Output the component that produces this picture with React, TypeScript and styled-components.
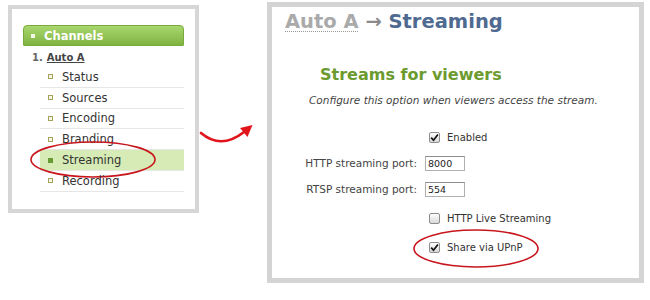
import React from "react";
import styled, { createGlobalStyle } from "styled-components";

const GlobalStyle = createGlobalStyle`
  html, body { margin: 0; padding: 0; background: #fff; }
  body { font-family: "DejaVu Sans", Verdana, sans-serif; }
`;

const Page = styled.div`
  width: 650px;
  height: 300px;
  box-sizing: border-box;
  display: flex;
  align-items: flex-start;
  padding: 2px 0 0 8px;
`;

/* ---------- left navigation ---------- */
const NavPanel = styled.nav`
  margin-top: 3px;
  width: 191px;
  height: 208px;
  flex: none;
  box-sizing: border-box;
  border: 4px solid #d6d6d6;
  padding: 16px 11px 0;
  display: flex;
  flex-direction: column;
`;

const NavHeader = styled.div`
  height: 21px;
  box-sizing: border-box;
  border: 1px solid #78aa3c;
  border-radius: 4px 4px 1px 1px;
  background: linear-gradient(#a9d66e, #7fb441);
  display: flex;
  align-items: center;
  gap: 9px;
  padding-left: 7px;
  color: #fff;
  font-weight: bold;
  font-size: 11.5px;
`;

const HeaderBullet = styled.span`
  width: 4px;
  height: 4px;
  background: #f1f8e6;
`;

const ChannelLine = styled.div`
  height: 20px;
  margin-top: 1px;
  padding-left: 9px;
  display: flex;
  align-items: center;
  gap: 4px;
  font-size: 10px;
  font-weight: bold;
  color: #666;
`;

const ChannelLink = styled.span`
  color: #444;
  text-decoration: underline;
`;

const NavList = styled.ul`
  list-style: none;
  margin: 0 0 0 17px;
  padding: 0;
`;

const NavItem = styled.li<{ $active?: boolean }>`
  position: relative;
  height: 20.8px;
  box-sizing: border-box;
  border-bottom: 1px solid #e6e6e6;
  display: flex;
  align-items: center;
  gap: 9px;
  padding-left: 8px;
  font-size: 11.5px;
  color: #333;
  background: ${(p) => (p.$active ? "#d6ebb5" : "transparent")};
`;

const ItemBullet = styled.span<{ $active?: boolean }>`
  width: 5px;
  height: 5px;
  box-sizing: border-box;
  border: 1px solid ${(p) => (p.$active ? "#6a9a34" : "#a3a35e")};
  background: ${(p) => (p.$active ? "#6a9a34" : "#f6f6e6")};
`;

const NavRing = styled.svg`
  position: absolute;
  left: -10px;
  top: -9px;
  overflow: visible;
  pointer-events: none;
`;

/* ---------- arrow between panels ---------- */
const ArrowSlot = styled.div`
  width: 68px;
  flex: none;
  margin-top: 118px;
  display: flex;
`;

/* ---------- right content ---------- */
const ContentPanel = styled.section`
  width: 377px;
  height: 281px;
  flex: none;
  box-sizing: border-box;
  border: 5px solid #d4d4d4;
  display: flex;
  flex-direction: column;
`;

const PageTitle = styled.h1`
  margin: 3px 0 0 13px;
  font-size: 19.5px;
  line-height: 23px;
  font-weight: bold;
  color: #4f6a91;
  white-space: nowrap;
`;

const Crumb = styled.span`
  color: #aaa;
  text-decoration: underline dotted #999;
  text-decoration-thickness: 1px;
  text-underline-offset: 3px;
`;

const CrumbArrow = styled.span`
  color: #8a8a8a;
`;

const SectionTitle = styled.h2`
  margin: 31.5px 0 0 48px;
  font-size: 16px;
  line-height: 20px;
  font-weight: bold;
  color: #6b9a2e;
`;

const Hint = styled.p`
  margin: 8px 0 0 37px;
  font-size: 10.5px;
  line-height: 14px;
  font-style: italic;
  color: #444;
  white-space: nowrap;
`;

const Form = styled.div`
  margin-top: 22.5px;
  display: flex;
  flex-direction: column;
`;

const FormRow = styled.div<{ $gap: number }>`
  margin-top: ${(p) => p.$gap}px;
  height: 16px;
  display: grid;
  grid-template-columns: 145px auto;
  column-gap: 8px;
  align-items: center;
`;

const FieldLabel = styled.label`
  grid-column: 1;
  text-align: right;
  font-size: 10.5px;
  color: #444;
  white-space: nowrap;
`;

const FieldCell = styled.div`
  grid-column: 2;
  display: flex;
  align-items: center;
`;

const PortInput = styled.input`
  width: 40px;
  height: 15px;
  box-sizing: border-box;
  border: 1px solid #b0b0b0;
  border-top-color: #8c8c8c;
  padding: 0 2px;
  margin: 0;
  font-family: "DejaVu Sans", Verdana, sans-serif;
  font-size: 9.5px;
  color: #222;
  outline: none;
`;

const CheckOption = styled.div`
  position: relative;
  margin-left: 4px;
  display: flex;
  align-items: center;
  gap: 7px;
  font-size: 10px;
  color: #333;
  white-space: nowrap;
`;

const CheckBox = styled.span`
  width: 11px;
  height: 11px;
  box-sizing: border-box;
  border: 1px solid #8e8e8e;
  border-radius: 2px;
  background: linear-gradient(#fdfdfd, #d9d9d9);
  display: flex;
  align-items: center;
  justify-content: center;
`;

const OptionRing = styled.svg`
  position: absolute;
  left: -16px;
  top: -13px;
  overflow: visible;
  pointer-events: none;
`;

const RED = "#c8161d";

function Ring({ w, h, as: Comp }: { w: number; h: number; as: typeof NavRing }) {
  return (
    <Comp width={w} height={h} viewBox={`0 0 ${w} ${h}`}>
      <ellipse
        cx={w / 2}
        cy={h / 2}
        rx={w / 2 - 1}
        ry={h / 2 - 1}
        fill="none"
        stroke={RED}
        strokeWidth={1.6}
      />
    </Comp>
  );
}

function Check({ checked }: { checked: boolean }) {
  return (
    <CheckBox>
      {checked && (
        <svg width="9" height="9" viewBox="0 0 9 9">
          <path d="M1.2 4.6 L3.5 7.2 L7.9 1.4" fill="none" stroke="#111" strokeWidth="1.7" />
        </svg>
      )}
    </CheckBox>
  );
}

const navItems = ["Status", "Sources", "Encoding", "Branding", "Streaming", "Recording"];

export default function App() {
  return (
    <>
      <GlobalStyle />
      <Page>
        <NavPanel>
          <NavHeader>
            <HeaderBullet />
            Channels
          </NavHeader>
          <ChannelLine>
            1. <ChannelLink>Auto A</ChannelLink>
          </ChannelLine>
          <NavList>
            {navItems.map((item) => {
              const active = item === "Streaming";
              return (
                <NavItem key={item} $active={active}>
                  <ItemBullet $active={active} />
                  {item}
                  {active && <Ring w={126} h={37} as={NavRing} />}
                </NavItem>
              );
            })}
          </NavList>
        </NavPanel>

        <ArrowSlot>
          <svg width="60" height="25" viewBox="0 0 60 25">
            <path d="M2 13 Q22 30 45 12" fill="none" stroke="#e0141a" strokeWidth="2.6" strokeLinecap="round" />
            <path d="M53.5 5 L41 8 L48.5 17 Z" fill="#e0141a" />
          </svg>
        </ArrowSlot>

        <ContentPanel>
          <PageTitle>
            <Crumb>Auto A</Crumb> <CrumbArrow>→</CrumbArrow> Streaming
          </PageTitle>
          <SectionTitle>Streams for viewers</SectionTitle>
          <Hint>Configure this option when viewers access the stream.</Hint>
          <Form>
            <FormRow $gap={0}>
              <FieldCell>
                <CheckOption>
                  <Check checked />
                  Enabled
                </CheckOption>
              </FieldCell>
            </FormRow>
            <FormRow $gap={10}>
              <FieldLabel>HTTP streaming port:</FieldLabel>
              <FieldCell>
                <PortInput readOnly value="8000" />
              </FieldCell>
            </FormRow>
            <FormRow $gap={10}>
              <FieldLabel>RTSP streaming port:</FieldLabel>
              <FieldCell>
                <PortInput readOnly value="554" />
              </FieldCell>
            </FormRow>
            <FormRow $gap={13}>
              <FieldCell>
                <CheckOption>
                  <Check checked={false} />
                  HTTP Live Streaming
                </CheckOption>
              </FieldCell>
            </FormRow>
            <FormRow $gap={13}>
              <FieldCell>
                <CheckOption>
                  <Check checked />
                  Share via UPnP
                  <Ring w={126} h={39} as={OptionRing} />
                </CheckOption>
              </FieldCell>
            </FormRow>
          </Form>
        </ContentPanel>
      </Page>
    </>
  );
}
